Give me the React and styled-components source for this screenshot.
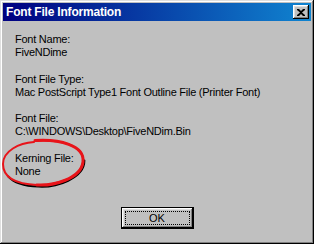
import styled, { createGlobalStyle } from 'styled-components';

const GlobalStyle = createGlobalStyle`
  html, body {
    margin: 0;
    padding: 0;
    background: #c0c0c0;
  }
  body {
    font-family: 'Liberation Sans', Arial, sans-serif;
  }
`;

const Window = styled.div`
  position: relative;
  box-sizing: border-box;
  width: 314px;
  height: 244px;
  padding: 3px;
  background: #c0c0c0;
  box-shadow: inset -1px -1px 0 #000000, inset 1px 1px 0 #dfdfdf,
    inset -2px -2px 0 #808080, inset 2px 2px 0 #ffffff;
  display: flex;
  flex-direction: column;
`;

const TitleBar = styled.div`
  height: 18px;
  display: flex;
  align-items: center;
  justify-content: space-between;
  padding: 0 2px 0 3px;
  background: linear-gradient(to right, #000080, #1084d0);
`;

const Title = styled.span`
  color: #ffffff;
  font-weight: bold;
  font-size: 12px;
  letter-spacing: -0.2px;
`;

const CloseButton = styled.div`
  box-sizing: border-box;
  width: 16px;
  height: 14px;
  background: #c0c0c0;
  box-shadow: inset -1px -1px 0 #000000, inset 1px 1px 0 #ffffff,
    inset -2px -2px 0 #808080, inset 2px 2px 0 #dfdfdf;
  display: flex;
  align-items: center;
  justify-content: center;
`;

const Body = styled.div`
  flex: 1;
  display: flex;
  flex-direction: column;
  padding: 12px 12px 0 12px;
`;

const Fields = styled.div`
  display: flex;
  flex-direction: column;
  gap: 13.5px;
`;

const Field = styled.div`
  font-size: 11px;
  line-height: 13px;
  letter-spacing: -0.25px;
  color: #000000;
  white-space: nowrap;
`;

const Footer = styled.div`
  display: flex;
  justify-content: center;
  margin-top: auto;
  padding-bottom: 12px;
`;

const Button = styled.button`
  box-sizing: border-box;
  width: 73px;
  height: 22px;
  border: 1px solid #000000;
  background: #c0c0c0;
  box-shadow: inset -1px -1px 0 #000000, inset 1px 1px 0 #ffffff,
    inset -2px -2px 0 #808080, inset 2px 2px 0 #dfdfdf;
  font-family: 'Liberation Sans', Arial, sans-serif;
  font-size: 11px;
  color: #000000;
  display: flex;
  align-items: stretch;
  padding: 3px;
`;

const Focus = styled.span`
  flex: 1;
  border: 1px dotted #000000;
  display: flex;
  align-items: center;
  justify-content: center;
`;

const Marker = styled.svg`
  position: absolute;
  left: 1px;
  top: 137px;
  pointer-events: none;
`;

const fields = [
  ['Font Name:', 'FiveNDime'],
  ['Font File Type:', 'Mac PostScript Type1 Font Outline File (Printer Font)'],
  ['Font File:', 'C:\\WINDOWS\\Desktop\\FiveNDim.Bin'],
  ['Kerning File:', 'None'],
];

export default function App() {
  return (
    <>
      <GlobalStyle />
      <Window>
        <TitleBar>
          <Title>Font File Information</Title>
          <CloseButton>
            <svg width="8" height="7" viewBox="0 0 8 7">
              <path d="M0 0h2l2 2 2-2h2v1L5 3.5 8 6v1H6L4 5 2 7H0V6l3-2.5L0 1z" fill="#000" />
            </svg>
          </CloseButton>
        </TitleBar>
        <Body>
          <Fields>
            {fields.map(([label, value]) => (
              <Field key={label}>
                <div>{label}</div>
                <div>{value}</div>
              </Field>
            ))}
          </Fields>
          <Footer>
            <Button>
              <Focus>OK</Focus>
            </Button>
          </Footer>
        </Body>
        <Marker width="86" height="52" viewBox="0 0 86 52">
          <path
            d="M82 22 C 82 40, 54 49, 36 48 C 22 47.5, 12 45, 6 38"
            fill="none"
            stroke="#000"
            strokeWidth="2"
            strokeLinecap="round"
            transform="translate(1.4 1.6)"
          />
          <path
            d="M34 4 C 58 2, 84 8, 82 25 C 80 42, 52 49, 36 48 C 14 47, 2 40, 2 27 C 2 14, 18 6, 33 5"
            fill="none"
            stroke="#e8141a"
            strokeWidth="2"
            strokeLinecap="round"
          />
          <path
            d="M34 3.5 C 58 2, 84 8, 82 25 C 80 42, 52 49, 36 48"
            fill="none"
            stroke="#e8141a"
            strokeWidth="3"
            strokeLinecap="round"
          />
        </Marker>
      </Window>
    </>
  );
}
